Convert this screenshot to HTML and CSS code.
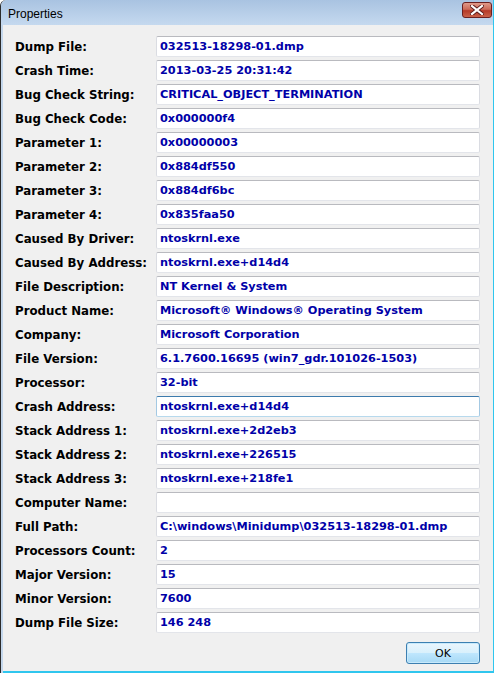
FILE: index.html
```html
<!DOCTYPE html>
<html>
<head>
<meta charset="utf-8">
<title>Properties</title>
<link rel="stylesheet" href="styles.css">
</head>
<body>
<div class="window">
  <div class="titlebar">
    <span class="title">Properties</span>
    <span class="close"><svg width="14" height="10" viewBox="0 0 14 10"><path d="M2 1 L12 9 M12 1 L2 9" stroke="#5a1a1a" stroke-width="4" stroke-linecap="square"/><path d="M2 1 L12 9 M12 1 L2 9" stroke="#ffffff" stroke-width="2.2" stroke-linecap="square"/></svg></span>
  </div>
  <div class="client">
    <div class="row"><span class="label">Dump File:</span><span class="field">032513-18298-01.dmp</span></div>
    <div class="row"><span class="label">Crash Time:</span><span class="field">2013-03-25 20:31:42</span></div>
    <div class="row"><span class="label">Bug Check String:</span><span class="field">CRITICAL_OBJECT_TERMINATION</span></div>
    <div class="row"><span class="label">Bug Check Code:</span><span class="field">0x000000f4</span></div>
    <div class="row"><span class="label">Parameter 1:</span><span class="field">0x00000003</span></div>
    <div class="row"><span class="label">Parameter 2:</span><span class="field">0x884df550</span></div>
    <div class="row"><span class="label">Parameter 3:</span><span class="field">0x884df6bc</span></div>
    <div class="row"><span class="label">Parameter 4:</span><span class="field">0x835faa50</span></div>
    <div class="row"><span class="label">Caused By Driver:</span><span class="field">ntoskrnl.exe</span></div>
    <div class="row"><span class="label">Caused By Address:</span><span class="field">ntoskrnl.exe+d14d4</span></div>
    <div class="row"><span class="label">File Description:</span><span class="field">NT Kernel &amp; System</span></div>
    <div class="row"><span class="label">Product Name:</span><span class="field">Microsoft® Windows® Operating System</span></div>
    <div class="row"><span class="label">Company:</span><span class="field">Microsoft Corporation</span></div>
    <div class="row"><span class="label">File Version:</span><span class="field">6.1.7600.16695 (win7_gdr.101026-1503)</span></div>
    <div class="row"><span class="label">Processor:</span><span class="field">32-bit</span></div>
    <div class="row"><span class="label">Crash Address:</span><span class="field focused">ntoskrnl.exe+d14d4</span></div>
    <div class="row"><span class="label">Stack Address 1:</span><span class="field">ntoskrnl.exe+2d2eb3</span></div>
    <div class="row"><span class="label">Stack Address 2:</span><span class="field">ntoskrnl.exe+226515</span></div>
    <div class="row"><span class="label">Stack Address 3:</span><span class="field">ntoskrnl.exe+218fe1</span></div>
    <div class="row"><span class="label">Computer Name:</span><span class="field"></span></div>
    <div class="row"><span class="label">Full Path:</span><span class="field">C:\windows\Minidump\032513-18298-01.dmp</span></div>
    <div class="row"><span class="label">Processors Count:</span><span class="field">2</span></div>
    <div class="row"><span class="label">Major Version:</span><span class="field">15</span></div>
    <div class="row"><span class="label">Minor Version:</span><span class="field">7600</span></div>
    <div class="row"><span class="label">Dump File Size:</span><span class="field">146 248</span></div>
    <div class="buttons"><button class="ok">OK</button></div>
  </div>
</div>
</body>
</html>
```
FILE: styles.css
```css
html, body {
  margin: 0;
  padding: 0;
  background: #ffffff;
}
body {
  width: 496px;
  height: 673px;
  overflow: hidden;
}
.window {
  width: 494px;
  height: 673px;
  box-sizing: border-box;
  border-left: 1px solid #2b2b2b;
  border-right: 1px solid #2fc6ee;
  border-top-left-radius: 6px;
  background: #c4d7ec;
  display: flex;
  flex-direction: column;
}
.titlebar {
  height: 25px;
  flex: none;
  display: flex;
  align-items: center;
  justify-content: space-between;
  padding: 0 2px 0 7px;
  background: linear-gradient(#a9c3e1, #c5d9ef);
  border-top-left-radius: 6px;
}
.title {
  font-family: "Liberation Sans", Arial, sans-serif;
  font-size: 12px;
  color: #000000;
  margin-top: 3px;
}
.close {
  width: 30px;
  height: 16px;
  box-sizing: border-box;
  border: 1px solid #6b2020;
  border-radius: 3px;
  background: linear-gradient(#e09a8a 0%, #cc6a58 45%, #b53a28 55%, #c9624a 100%);
  display: flex;
  align-items: center;
  justify-content: center;
  margin-top: -5px;
  margin-right: -1px;
}
.client {
  flex: 1;
  margin-left: 2px;
  background: #f0f0f0;
  border-bottom: 2px solid #2fc6ee;
  padding: 11px 12px 0 12px;
  box-sizing: border-box;
}
.row {
  display: flex;
  align-items: center;
  height: 21px;
  margin-bottom: 3px;
}
.label {
  width: 141px;
  flex: none;
  font-family: "DejaVu Sans", Verdana, sans-serif;
  font-weight: bold;
  font-size: 11.8px;
  color: #000000;
}
.field {
  width: 324px;
  height: 21px;
  box-sizing: border-box;
  flex: none;
  background: #ffffff;
  border: 1px solid;
  border-color: #b9babf #dadce2 #e3e5ea #dadce2;
  border-radius: 2px;
  padding: 0 3px;
  display: flex;
  align-items: center;
  font-family: "DejaVu Sans", Verdana, sans-serif;
  font-weight: bold;
  font-size: 11.3px;
  color: #0000a8;
  white-space: nowrap;
  overflow: hidden;
}
.field.focused {
  border-color: #3d7bad #a4c9e3 #b7d9ed #a4c9e3;
}
.buttons {
  display: flex;
  justify-content: flex-end;
  padding-top: 6px;
  padding-right: 1px;
}
.ok {
  width: 74px;
  height: 22px;
  box-sizing: border-box;
  border: 1px solid #3c7fb1;
  border-radius: 3px;
  background: linear-gradient(#eaf6fd 0%, #d9f0fc 48%, #bee6fd 52%, #a7d9f5 100%);
  box-shadow: inset 0 0 0 1px #c8eafc;
  font-family: "DejaVu Sans", Tahoma, sans-serif;
  font-size: 11px;
  color: #000000;
  padding: 0;
}
```
